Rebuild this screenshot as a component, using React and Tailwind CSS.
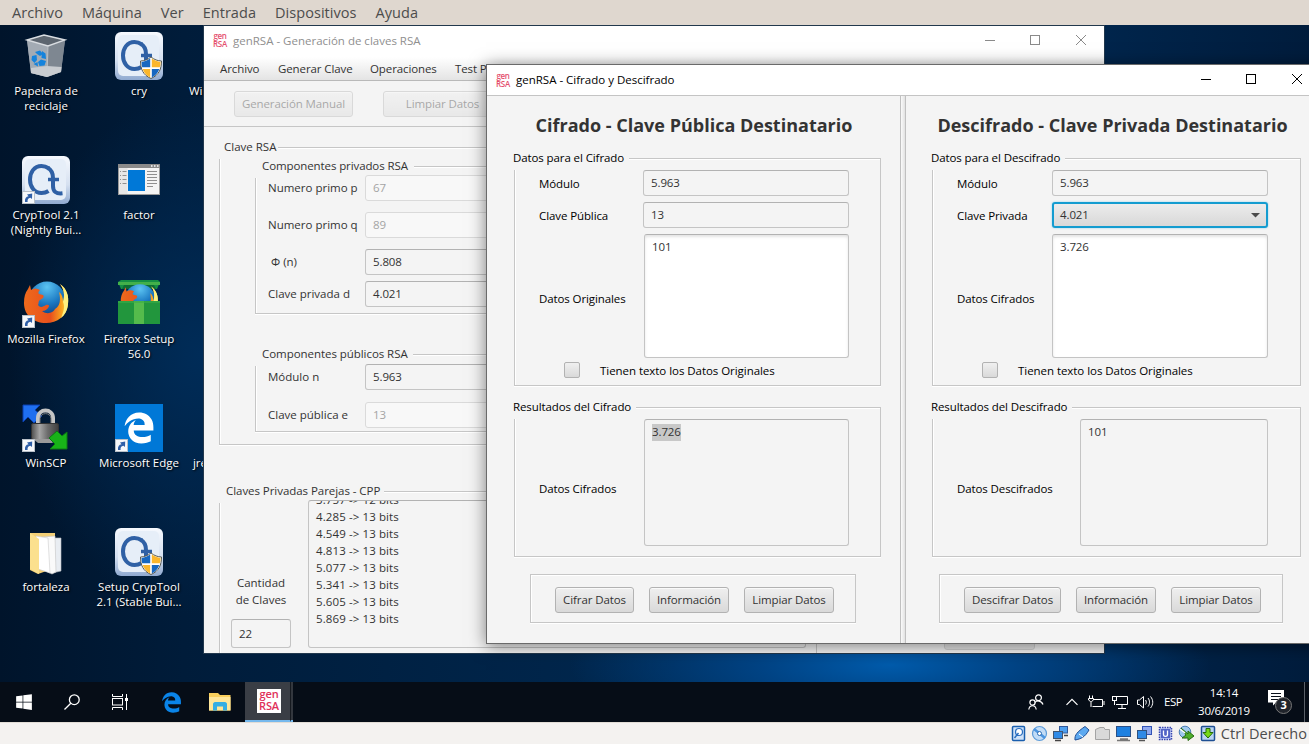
import React from "react";
import { FaEdgeLegacy, FaWindows } from "react-icons/fa6";

const LINE = "border-[#c6c6c6]";

/* ---------- icons ---------- */

function Shortcut() {
  return (
    <svg className="absolute bottom-0 left-0" width="13" height="13" viewBox="0 0 13 13">
      <rect x="0.5" y="0.5" width="12" height="12" fill="#f6f8fb" stroke="#b9c0c8" />
      <path d="M3 11C2.6 7.500 4 5.600 6.500 5.200L5 3.500L10.200 2.600L10 8L8.400 6.700C6.200 7 5.300 8.500 5.600 11Z" fill="#2f5fa8" />
    </svg>
  );
}

function CrypIcon({ shield, shortcut }) {
  return (
    <span className="relative block size-12">
      <svg width="48" height="48" viewBox="0 0 48 48">
        <defs>
          <linearGradient id="tile" x1="0" y1="0" x2="0" y2="1">
            <stop offset="0" stopColor="#f6f9fe" />
            <stop offset="0.6" stopColor="#d5e0f0" />
            <stop offset="1" stopColor="#8fa9d0" />
          </linearGradient>
        </defs>
        <rect x="0" y="0" width="48" height="48" rx="6" fill="url(#tile)" />
        <rect x="3" y="3" width="41" height="41" rx="5" fill="#e6eef8" />
        <path d="M27 12.500C24.500 10.800 22 10 19.500 10C12 10 8 16.500 8 23.500C8 31 12.500 37 19.500 37C22.500 37 24.500 36.300 26.500 35" fill="none" stroke="#2f60a5" strokeWidth="4" />
        <path d="M26 12C29.500 14 31 18 31 22V30C31 35.500 34 38 40.500 37.300" fill="none" stroke="#2f60a5" strokeWidth="4" />
        <path d="M26 23.500H37" stroke="#2f60a5" strokeWidth="3.500" />
        {shield && (
          <g>
            <path d="M36 25C33 27.500 29 29 25.500 29C25.500 37 28 43 36 46.500C44 43 46.500 37 46.500 29C43 29 39 27.500 36 25Z" fill="#fff" stroke="#5b5b50" />
            <path d="M35.200 26.600C32.500 28.700 29.500 29.700 26.500 29.900C26.500 32 26.700 33.800 27.200 35.300H35.200Z" fill="#1767c0" />
            <path d="M36.800 26.600C39.500 28.700 42.500 29.700 45.500 29.900C45.500 32 45.300 33.800 44.800 35.300H36.800Z" fill="#fbb62c" />
            <path d="M35.200 36.900H27.700C29 41 31.500 43.600 35.200 45.400Z" fill="#fbb62c" />
            <path d="M36.800 36.900H44.300C43 41 40.500 43.600 36.800 45.400Z" fill="#1767c0" />
          </g>
        )}
      </svg>
      {shortcut && <Shortcut />}
    </span>
  );
}

function BinIcon() {
  return (
    <svg width="48" height="48" viewBox="0 0 48 48">
      <path d="M5 8L22 3L43 8L39 40L25 45L9 41Z" fill="#8c959f" />
      <path d="M5 8L26 14L25 45L9 41Z" fill="#a3abb4" />
      <path d="M26 14L43 8L39 40L25 45Z" fill="#7e8791" />
      <path d="M9 36L25 34L39.500 35L39 40L25 45L9 41Z" fill="#c9ccd0" />
      <path d="M5 8L22 3L43 8L26 14Z" fill="#5d6670" stroke="#d9dde1" strokeWidth="1.400" />
      <path d="M26 14L25 45" stroke="#c5cbd1" strokeWidth="0.800" />
      <g fill="#1583dc">
        <path d="M13 20L18 18.500L21 22L18 24L15 22Z" />
        <path d="M20 19L23.500 21.500L24 27L19.500 26Z" />
        <path d="M10 24L14.500 23L15 28L12.500 31L9.500 28Z" />
        <path d="M16 30L19 27.500L24 29L22.500 33.500L17.500 34Z" />
        <path d="M11.500 32L15.500 30L16 34.500Z" />
      </g>
    </svg>
  );
}

function FactorIcon() {
  return (
    <svg width="48" height="48" viewBox="0 0 48 48">
      <rect x="3.500" y="8.500" width="41" height="30" fill="#f4f4f4" stroke="#9a9a9a" />
      <rect x="3" y="8" width="42" height="4" fill="#8a8a8a" />
      <path d="M36 10h1.500M39 10h1.500M42 10h1.500" stroke="#fff" strokeWidth="1.500" />
      <rect x="4" y="12" width="8.500" height="26" fill="#e6e6e6" />
      <rect x="13" y="14" width="17" height="21" fill="#0078d7" />
      <path d="M5 15.500h1M7.500 15.500h4M5 19.500h1M7.500 19.500h4M5 23.500h1M7.500 23.500h4M5 27.500h1M7.500 27.500h4" stroke="#8f8f8f" />
      <path d="M32 15.500h10M32 18.500h10M32 21.500h10M32 24.500h10M32 27.500h10M32 30.500h6" stroke="#8f8f8f" />
    </svg>
  );
}

function FoxArt() {
  return (
    <g>
      <defs>
        <radialGradient id="globe" cx="0.5" cy="0.15" r="0.9">
          <stop offset="0" stopColor="#5cc4f2" />
          <stop offset="0.5" stopColor="#1b78c2" />
          <stop offset="1" stopColor="#0d2f6e" />
        </radialGradient>
        <linearGradient id="fox" x1="0" y1="0" x2="1" y2="0">
          <stop offset="0" stopColor="#ee6a1c" />
          <stop offset="0.6" stopColor="#e9501d" />
          <stop offset="0.85" stopColor="#f9a31f" />
          <stop offset="1" stopColor="#fde24d" />
        </linearGradient>
      </defs>
      <circle cx="25" cy="20" r="18.500" fill="url(#globe)" />
      <path d="M38 4C45 9 47 16 46 24C45 36 35 43 24 43C11 43 2 35 2 23C2 17 3 13 6 9L8 5L9 10C12 8 15 8 18 10C16 12 16 13 17 14L21 15C23 17 20 19 18 20C16 21 17 24 16 25C18 28 21 27 24 25C27 24 28 26 26 28C24 31 20 31 20 31C25 35 31 33 33 29C38 26 39 20 37 12C40 14 41 18 41 22C43 15 42 9 38 4Z" fill="url(#fox)" />
      <path d="M38 4C45 9 47 16 46 24C45.500 30 43 35 39 38C42 31 43 26 41 22C43 15 42 9 38 4Z" fill="#fff17f" />
    </g>
  );
}

function FirefoxIcon() {
  return (
    <span className="relative block size-12">
      <svg width="48" height="48" viewBox="0 0 48 48"><FoxArt /></svg>
      <Shortcut />
    </span>
  );
}

function FirefoxSetupIcon() {
  return (
    <svg width="48" height="48" viewBox="0 0 48 48">
      <path d="M3 2L6 0H43L45 2L42 9H6Z" fill="#159044" />
      <path d="M3 2H45V5H3Z" fill="#43b04a" />
      <path d="M7 9L9 5H39L41 9Z" fill="#0d6c33" />
      <g transform="translate(4 3) scale(0.840)"><FoxArt /></g>
      <path d="M3 21H45V44H3Z" fill="#22963d" />
      <path d="M19 21H29V44H19Z" fill="#55bb4c" />
      <path d="M3 21H45V23H3Z" fill="#3cae48" opacity="0.6" />
    </svg>
  );
}

function WinScpIcon() {
  return (
    <span className="relative block size-12">
      <svg width="48" height="48" viewBox="0 0 48 48">
        <defs>
          <linearGradient id="lock" x1="0" y1="0" x2="1" y2="0">
            <stop offset="0" stopColor="#4e4e4e" />
            <stop offset="0.3" stopColor="#a5a5a5" />
            <stop offset="0.6" stopColor="#6c6c6c" />
            <stop offset="1" stopColor="#3e3e3e" />
          </linearGradient>
        </defs>
        <path d="M1 1L18 1L13 6L20 12L12 19L6 13L1 18Z" fill="#1f6ff0" stroke="#0b3fae" />
        <path d="M16 20V14C16 4 31 4 31 14V20" fill="none" stroke="#c4c4c4" strokeWidth="4" />
        <path d="M18 20V14.500C18 8 29 8 29 14.500V20" fill="none" stroke="#7c7c7c" strokeWidth="1" />
        <rect x="9.500" y="19.500" width="27" height="16" rx="1.500" fill="url(#lock)" stroke="#333" />
        <path d="M11 35L36 35L30 39H16Z" fill="#9a9a9a" />
        <path d="M45 28V45H28L33 40L27 34L35 27L40 32Z" fill="#18b318" stroke="#0c7a12" />
      </svg>
      <Shortcut />
    </span>
  );
}

function EdgeIcon() {
  return (
    <span className="relative flex size-12 items-center justify-center bg-[#0078d7] text-white">
      <FaEdgeLegacy size={32} />
      <Shortcut />
    </span>
  );
}

function FolderIcon() {
  return (
    <svg width="48" height="48" viewBox="0 0 48 48">
      <path d="M8 5H33V40L16 46L8 42Z" fill="#f4d077" />
      <path d="M26 10H39V43L30 45Z" fill="#e9edf2" stroke="#b5bac0" strokeWidth="0.600" />
      <path d="M20 9L33 8L34 44L30 46L19 41Z" fill="#fafafa" stroke="#c4c4c4" strokeWidth="0.600" />
      <path d="M14 8L26 10L28 45L16 41Z" fill="#fff" stroke="#ccc" strokeWidth="0.600" />
      <path d="M8 5L17 11V46L8 41Z" fill="#fbe08e" />
    </svg>
  );
}

function GenLogo({ small }) {
  return small ? (
    <span className="flex w-4 flex-col items-center font-['Open_Sans',sans-serif] text-[8px] leading-[8px] font-semibold tracking-[-0.3px] text-[#e5506e]">
      <span className="-mt-px">gen</span>
      <span>RSA</span>
    </span>
  ) : (
    <span className="ml-px flex size-6 flex-col items-center bg-white font-['Open_Sans',sans-serif] text-[11px] leading-[12px] font-semibold tracking-[-0.1px] text-[#e0305a]">
      <span className="-mt-px">gen</span>
      <span>RSA</span>
    </span>
  );
}

/* ---------- desktop ---------- */

const ICONS = [
  [<BinIcon />, "Papelera de", "reciclaje"],
  [<CrypIcon shield />, "cry"],
  [<CrypIcon shortcut />, "CrypTool 2.1", "(Nightly Bui..."],
  [<FactorIcon />, "factor"],
  [<FirefoxIcon />, "Mozilla Firefox"],
  [<FirefoxSetupIcon />, "Firefox Setup", "56.0"],
  [<WinScpIcon />, "WinSCP"],
  [<EdgeIcon />, "Microsoft Edge"],
  [<FolderIcon />, "fortaleza"],
  [<CrypIcon shield />, "Setup CrypTool", "2.1 (Stable Bui..."],
];

function Desktop() {
  return (
    <div className="flex h-full">
      <div className="grid w-[186px] shrink-0 auto-rows-[124px] grid-cols-[92px_94px] pt-[7px]">
        {ICONS.map(([icon, ...lines]) => (
          <div key={lines.join()} className="flex flex-col items-center">
            {icon}
            <div className="mt-[3px] flex flex-col items-center text-[11.500px] leading-[15px] tracking-[0px] whitespace-nowrap text-white [text-shadow:1px_1px_2px_#000]">
              {lines.map((l) => <span key={l}>{l}</span>)}
            </div>
          </div>
        ))}
      </div>
      <div className="w-[18px] overflow-hidden pt-[58px] pl-[3px] text-[11.500px] leading-[15px] text-white [text-shadow:1px_1px_2px_#000]">
        <div>Wi</div>
        <div className="mt-[357px] pl-[4px]">jre</div>
      </div>
    </div>
  );
}

/* ---------- controls ---------- */

function WindowButtons({ className, color }) {
  return (
    <svg className={className} width="102" height="12" viewBox="0 0 102 12" fill="none" stroke={color}>
      <path d="M0 6.500H10" />
      <rect x="45.500" y="1.500" width="9" height="9" />
      <path d="M91 1L101 11M101 1L91 11" />
    </svg>
  );
}

function Field({ className, children, disabled }) {
  return (
    <div className={`flex h-[26px] shrink-0 items-center rounded-[3px] border px-[7px] ${disabled ? "border-[#dadada] bg-[#f8f8f8] text-[#a4a4a4]" : "border-[#c4c4c4] border-t-[#b2b2b2] bg-[#f4f4f4] text-[#333]"} ${className}`}>
      {children}
    </div>
  );
}

function Area({ className, children }) {
  return (
    <div className={`shrink-0 rounded-[3px] border border-[#c4c4c4] border-t-[#b2b2b2] px-[7px] pt-[4px] leading-[16px] text-[#333] ${className}`}>
      {children}
    </div>
  );
}

function Button({ className, children }) {
  return (
    <div className={`flex h-[26px] shrink-0 items-center justify-center rounded-[3px] border border-[#b2b2b2] bg-linear-to-b from-[#efefef] to-[#d9d9d9] text-[#333] shadow-[inset_0_1px_0_#fafafa] ${className}`}>
      {children}
    </div>
  );
}

function Panel({ title, className, titleClass = "", children }) {
  return (
    <div className={`flex shrink-0 flex-col ${className}`}>
      <div className="flex h-6 shrink-0 items-center">
        <span className={`shrink-0 whitespace-nowrap ${titleClass}`}>{title}</span>
        <div className={`mt-3 h-3 flex-1 border-t border-r ${LINE} shadow-[inset_0_1px_0_#fff]`} />
      </div>
      <div className={`flex min-h-0 flex-1 flex-col border-x border-b ${LINE} shadow-[inset_1px_0_0_#fff,0_1px_0_#fff]`}>{children}</div>
    </div>
  );
}

/* ---------- main window ---------- */

function Row({ label, value, disabled, className = "" }) {
  return (
    <div className={`flex h-[26px] shrink-0 items-center pl-3 ${className}`}>
      <span className="w-[97px] shrink-0 whitespace-nowrap tracking-[0px]">{label}</span>
      <Field disabled={disabled} className="w-[300px]">{value}</Field>
    </div>
  );
}

const KEYS = ["3.757 -> 12 bits", "4.285 -> 13 bits", "4.549 -> 13 bits", "4.813 -> 13 bits", "5.077 -> 13 bits", "5.341 -> 13 bits", "5.605 -> 13 bits", "5.869 -> 13 bits"];

function MainWindow() {
  return (
    <div className="absolute top-0 left-[203px] flex h-[629px] w-[902px] flex-col overflow-hidden border border-[#22384d] bg-[#f4f4f4] text-[#333]">
      <div className="flex h-[31px] shrink-0 items-center bg-white pb-[2px] pl-2 text-[#8f8f8f]">
        <GenLogo small />
        <span className="ml-[5px] flex-1 tracking-[0px]">genRSA - Generación de claves RSA</span>
        <WindowButtons className="mr-[17px] -mt-px" color="#8a8a8a" />
      </div>
      <div className="flex h-6 shrink-0 items-center border-b border-[#b9b9b9] bg-linear-to-b from-white to-[#e4e4e4] pl-4 whitespace-nowrap">
        <span className="w-[58px]">Archivo</span>
        <span className="w-[92px]">Generar Clave</span>
        <span className="w-[85px]">Operaciones</span>
        <span>Test Primalidad</span>
      </div>
      <div className="flex h-[46px] shrink-0 items-center gap-[30px] border-b border-[#c6c6c6] pl-[30px]">
        <Button className="w-[119px] opacity-40">Generación Manual</Button>
        <Button className="w-[119px] opacity-40">Limpiar Datos</Button>
      </div>
      <Panel title="Clave RSA" titleClass="pl-[5px] pr-[2px] tracking-[0px]" className="mt-[8px] ml-[15px] h-[310px] w-[560px]">
        <Panel title="Componentes privados RSA" titleClass="pl-[7px] pr-[6px]" className="-mt-[5px] ml-[35px] h-[160px] w-[480px]">
          <Row label="Numero primo p" value="67" disabled className="-mt-[3px]" />
          <Row label="Numero primo q" value="89" disabled className="mt-[11px]" />
          <Row label={<span className="pl-[3px]">Φ (n)</span>} value="5.808" className="mt-[11px]" />
          <Row label="Clave privada d" value="4.021" className="mt-[6px]" />
        </Panel>
        <Panel title="Componentes públicos RSA" titleClass="pl-[7px] pr-[5px] tracking-[-0.05px]" className="mt-[28px] ml-[35px] h-[90px] w-[480px]">
          <Row label="Módulo n" value="5.963" className="-mt-[2px]" />
          <Row label="Clave pública e" value="13" disabled className="mt-[12px]" />
        </Panel>
      </Panel>
      <div className="mt-[34px] ml-[15px] flex h-[180px] shrink-0">
        <Panel title="Claves Privadas Parejas - CPP" titleClass="pl-[7px] pr-[4px] tracking-[-0.05px]" className="w-[598px]">
          <div className="-mt-[3px] flex">
            <div className="mt-[74px] ml-[11px] flex w-[60px] shrink-0 flex-col">
              <span className="text-center leading-[17px] tracking-[0px]">Cantidad<br />de Claves</span>
              <Field className="mt-[11px] h-[29px]">22</Field>
            </div>
            <div className="ml-[17px] flex h-[148px] w-[498px] flex-col overflow-hidden rounded-[3px] border border-[#c4c4c4] border-t-[#b2b2b2] pl-[7px] leading-[17px] tracking-[0.1px]">
              <div className="-mt-[10px]">{KEYS.map((k) => <div key={k}>{k}</div>)}</div>
            </div>
          </div>
        </Panel>
        <Button className="mt-[145px] ml-[127px] w-[91px] opacity-50" />
      </div>
    </div>
  );
}

/* ---------- dialog ---------- */

function CipherPane({ data }) {
  return (
    <div className="flex w-[413px] shrink-0 flex-col text-black">
      <h1 className={`mt-[17px] self-center text-[18px] leading-[24px] font-bold tracking-[0px] whitespace-nowrap text-[#333] ${data.headClass}`}>{data.heading}</h1>
      <Panel title={data.inputs} titleClass="pr-[5px] -ml-px" className={`mt-[9px] h-[240px] ${data.panel}`}>
        <div className="flex h-[26px] shrink-0 items-center">
          <span className={`${data.label} pt-[2px]`}>Módulo</span>
          <Field className={data.field}>5.963</Field>
        </div>
        <div className="mt-[6px] flex h-[26px] shrink-0 items-center">
          <span className={`${data.label} pt-[2px]`}>{data.keyLabel}</span>
          {data.select ? (
            <div className="flex h-[26px] w-[216px] items-center justify-between rounded-[3px] border-2 border-[#139cd0] bg-linear-to-b from-[#ececec] to-[#d8d8d8] pr-[6px] pl-[6px] text-[#333] shadow-[0_0_2px_#7fcbea]">
              4.021
              <svg width="9" height="5" viewBox="0 0 9 5"><path d="M0 0H9L4.500 4.500Z" fill="#4a4a4a" /></svg>
            </div>
          ) : (
            <Field className={data.field}>13</Field>
          )}
        </div>
        <div className="mt-[6px] flex h-[124px] shrink-0 items-center">
          <span className={`${data.label} mt-[5px]`}>{data.dataLabel}</span>
          <Area className={`h-[124px] bg-white shadow-[inset_0_2px_3px_#e4e4e4] ${data.area}`}>{data.input}</Area>
        </div>
        <div className="mt-[4px] ml-[49px] flex h-4 items-center">
          <span className="size-4 rounded-[2px] border border-[#b2b2b2] bg-linear-to-b from-[#f0f0f0] to-[#d9d9d9]" />
          <span className="ml-5 pt-[2px] tracking-[-0.05px]">Tienen texto los Datos Originales</span>
        </div>
      </Panel>
      <Panel title={data.results} titleClass="pr-[5px] -ml-px" className={`mt-[9px] h-[162px] ${data.panel}`}>
        <div className="flex h-[127px] shrink-0 items-center">
          <span className={`${data.outLabel} mt-[13px]`}>{data.outName}</span>
          <Area className={`h-[127px] ${data.outArea}`}>{data.output}</Area>
        </div>
      </Panel>
      <div className={`mt-[17px] flex h-[49px] shrink-0 items-center gap-[15px] border border-[#c6c6c6] pt-[2px] pl-6 shadow-[inset_1px_1px_0_#fff,0_1px_0_#fff] ${data.box}`}>
        <Button className={data.action}>{data.actionName}</Button>
        <Button className="w-[80px]">Información</Button>
        <Button className="w-[90px]">Limpiar Datos</Button>
      </div>
    </div>
  );
}

const ENC = {
  heading: "Cifrado - Clave Pública Destinatario",
  headClass: "ml-px",
  inputs: "Datos para el Cifrado",
  panel: "ml-[27px] w-[367px]",
  label: "w-[128px] pl-6 shrink-0 whitespace-nowrap",
  field: "w-[206px]",
  keyLabel: "Clave Pública",
  dataLabel: "Datos Originales",
  area: "ml-px w-[205px]",
  input: "101",
  results: "Resultados del Cifrado",
  outLabel: "w-[129px] pl-6 shrink-0 whitespace-nowrap",
  outName: "Datos Cifrados",
  outArea: "w-[205px]",
  output: <span className="inline-block h-[17px] bg-[#c8c8c8] leading-[16px]">3.726</span>,
  box: "ml-[43px] w-[326px]",
  action: "w-[79px]",
  actionName: "Cifrar Datos",
};

const DEC = {
  heading: "Descifrado - Clave Privada Destinatario",
  headClass: "",
  inputs: "Datos para el Descifrado",
  panel: "ml-[26px] w-[369px]",
  label: "w-[119px] pl-6 shrink-0 whitespace-nowrap",
  field: "w-[216px]",
  select: true,
  keyLabel: "Clave Privada",
  dataLabel: "Datos Cifrados",
  area: "w-[216px]",
  input: "3.726",
  results: "Resultados del Descifrado",
  outLabel: "w-[147px] pl-6 shrink-0 whitespace-nowrap",
  outName: "Datos Descifrados",
  outArea: "w-[188px]",
  output: "101",
  box: "ml-[33px] w-[344px]",
  action: "w-[97px]",
  actionName: "Descifrar Datos",
};

function CipherDialog() {
  return (
    <div className="absolute top-[39px] left-[486px] flex h-[580px] w-[840px] flex-col border border-[#6a6a6a] bg-[#f4f4f4] shadow-[0_2px_16px_rgba(0,0,0,0.5)]">
      <div className="flex h-[31px] shrink-0 items-center border-b border-[#c4c4c4] bg-white pl-2 text-black">
        <GenLogo small />
        <span className="ml-[5px] flex-1 tracking-[0px]">genRSA - Cifrado y Descifrado</span>
        <WindowButtons className="mr-[22px] -mt-[3px]" color="#000" />
      </div>
      <div className="flex min-h-0 flex-1">
        <CipherPane data={ENC} />
        <div className="w-[6px] shrink-0 border-x border-[#c0c0c0] bg-linear-to-r from-[#fafafa] to-[#e2e2e2]" />
        <CipherPane data={DEC} />
      </div>
    </div>
  );
}

/* ---------- bars ---------- */

function Taskbar() {
  return (
    <div className="flex h-10 shrink-0 items-center bg-[#060d17] text-white">
      <span className="flex w-12 justify-center"><FaWindows size={18} /></span>
      <svg className="mx-4" width="16" height="16" viewBox="0 0 16 16" fill="none" stroke="#fff" strokeWidth="1.300">
        <circle cx="10.300" cy="5.700" r="4.900" /><path d="M6.800 9.200L0.500 15.500" />
      </svg>
      <svg className="mx-4" width="16" height="16" viewBox="0 0 16 16" fill="none" stroke="#fff">
        <path d="M0.500 0V2.500H10.500V0M0.500 16V13.500H10.500V16M14.500 0V16" /><rect x="0.500" y="4.500" width="10" height="6.500" /><path d="M13 5.500H16" strokeWidth="3" />
      </svg>
      <span className="ml-[17px] text-[#0a84e8]"><FaEdgeLegacy size={21} /></span>
      <svg className="ml-[27px]" width="22" height="18" viewBox="0 0 22 18">
        <path d="M0 0H9L11 2H21.500V17.500H0Z" fill="#f9cf5c" /><path d="M0 4H21.500V17.500H0Z" fill="#ffe69a" />
        <path d="M4 17.500V11C4 10 5 9 6 9H16C17 9 18 10 18 11V17.500H14V13.500H8V17.500Z" fill="#35aee4" />
      </svg>
      <span className="ml-[14px] flex h-10 w-[45px] items-center justify-center border-b-2 border-[#76b9ed] bg-[#3a3e45] pl-[2px]"><GenLogo /></span>
      <span className="h-10 w-[3px] border-b-2 border-l border-[#76b9ed] border-l-[#15191f] bg-[#33373e]" />
      <span className="flex-1" />
      <svg width="16" height="16" viewBox="0 0 16 16" fill="none" stroke="#fff" strokeWidth="1.200">
        <circle cx="10.500" cy="3.800" r="2.900" /><path d="M6.800 8.500C8.500 6.500 13.500 6 15 10.500" /><circle cx="4.500" cy="8.500" r="2.600" /><path d="M0.800 15.500C1.500 10.500 7.500 10.500 8.200 15.500" />
      </svg>
      <svg className="ml-[22px]" width="12" height="8" viewBox="0 0 12 8" fill="none" stroke="#fff" strokeWidth="1.200"><path d="M0.500 6.800L6 1.300L11.500 6.800" /></svg>
      <svg className="ml-[10px]" width="17" height="14" viewBox="0 0 17 14" fill="none" stroke="#fff">
        <path d="M5.500 4.500H14.500V11.500H4.500M16 6V10" /><path d="M1.500 0.500V3M4.500 0.500V3M0.500 3.500H5.500V5L3.500 6.500H2.500L0.500 5ZM3 7V12" />
      </svg>
      <svg className="ml-[7px]" width="17" height="14" viewBox="0 0 17 14" fill="none" stroke="#fff">
        <path d="M5 1.500H15.500V9.500H4M10 10V13M6 13.500H14" /><rect x="0.500" y="1.500" width="4" height="4" /><path d="M2.500 6V10" />
      </svg>
      <svg className="ml-[8px]" width="17" height="14" viewBox="0 0 17 14" fill="none" stroke="#fff">
        <path d="M0.500 5V9.500H2.500L6.500 13V1.500L2.500 5Z" /><path d="M8.500 5C9.500 6 9.500 8.500 8.500 9.500M11 3C13 5.500 13 9 11 11.500M13.500 1.500C16.500 5 16.500 9.500 13.500 13" />
      </svg>
      <span className="ml-[10px] w-[20px] text-[11.500px] tracking-[-0.5px]">ESP</span>
      <span className="ml-[13px] flex w-[54px] flex-col items-center text-[11.500px] leading-[18px] whitespace-nowrap"><span className="tracking-[-0.2px]">14:14</span><span className="tracking-[-0.3px]">30/6/2019</span></span>
      <span className="relative ml-[17px] block h-6 w-[25px]">
        <svg width="17" height="16" viewBox="0 0 17 16"><path d="M0 0H16V12.500H8L5 15.500V12.500H0Z" fill="#fff" /><path d="M3 3.500H13M3 6.500H13M3 9.500H10" stroke="#0a111b" /></svg>
        <span className="absolute top-[7px] left-[7px] flex size-[17px] items-center justify-center rounded-full border border-[#777] bg-[#20242b] text-[11px] font-bold">3</span>
      </span>
      <span className="ml-[11px] h-10 w-[5px] border-l border-[#5a6068]" />
    </div>
  );
}

function StatusBar() {
  return (
    <div className="flex h-[22px] shrink-0 items-center justify-end border-t border-[#e2ddd6] bg-[#f4f2f0] pr-[2px] text-[14.500px] tracking-[0.1px] text-[#4c4c4c]">
      <svg className="mr-[4px]" width="206" height="17" viewBox="0 0 206 17" fill="none">
        <rect x="1.500" y="1.500" width="12" height="14" rx="1" fill="#cfe2f8" stroke="#1a5fae" strokeWidth="1.500" />
        <circle cx="8" cy="7" r="3.500" fill="#fff" stroke="#2b6fc0" strokeWidth="1.200" /><path d="M3.500 13L7.500 8" stroke="#2b6fc0" strokeWidth="1.500" />
        <circle cx="28.500" cy="8.500" r="7" fill="#c2dcf6" stroke="#5d9bd8" strokeWidth="1.200" /><path d="M23 4L28 8L34 13" stroke="#4b95e0" strokeWidth="2.500" /><circle cx="28.500" cy="8.500" r="2" fill="#fff" stroke="#2c6db5" />
        <rect x="48.500" y="1.500" width="8" height="6.500" fill="#4fa0ee" stroke="#31589a" /><rect x="42.500" y="6.500" width="9" height="7" fill="#2f8ae6" stroke="#41556f" /><path d="M44 15.500H50M53 10.500H57" stroke="#444" strokeWidth="1.500" />
        <path d="M64 15C63.500 10 66 7 74 1.500L78 5C74 12 70 14 64 15Z" fill="#5da9f0" stroke="#1d4c94" /><path d="M68 9L72 12" stroke="#fff" />
        <path d="M84.500 14.500V4.500L89 2.500H93L94 4.500H98.500V14.500Z" fill="#d9d9d9" stroke="#a4a4a4" />
        <rect x="105.500" y="1.500" width="14" height="10" fill="#1e80e0" stroke="#2a4f86" /><path d="M109 14H117M106 15.500H119" stroke="#777" strokeWidth="1.500" />
        <rect x="131.500" y="1.500" width="9" height="8" fill="#8fa8ee" stroke="#3353b5" /><rect x="126.500" y="5.500" width="9" height="8" fill="#2f8ae6" stroke="#30517d" /><path d="M128 15.500H134" stroke="#555" strokeWidth="1.500" />
        <rect x="148.500" y="2.500" width="12" height="12" fill="#b9c4f3" stroke="#3848b0" strokeWidth="1.500" strokeDasharray="1.500 1" /><rect x="150" y="4" width="9" height="9" fill="#5163c6" /><path d="M152.500 5.500V9.500C152.500 12 156.500 12 156.500 9.500V5.500" stroke="#fff" strokeWidth="1.300" />
        <circle cx="174" cy="7" r="5.800" fill="#9fc8ee" stroke="#4a7eb5" />
        <path d="M170 3L177 9V6L183 11L177 15.500V13H171L175 10Z" fill="#4fae2c" stroke="#276c14" /><path d="M169 4L174 8" stroke="#fff" strokeWidth="1.500" />
        <rect x="190.500" y="1.500" width="13" height="14" rx="1" fill="#b9d3f2" stroke="#1e4f93" strokeWidth="1.500" /><path d="M195 3.500H199V7.500H202L197 13L192 7.500H195Z" fill="#78d818" stroke="#246b0a" />
      </svg>
      <span>Ctrl Derecho</span>
    </div>
  );
}

export default function App() {
  return (
    <div className="flex h-[744px] w-[1309px] flex-col overflow-hidden font-['Open_Sans',sans-serif] text-[11.500px] tracking-[-0.1px]">
      <div className="flex h-[25px] shrink-0 items-center gap-[19px] bg-[#dfd7cf] pl-3 text-[14.500px] tracking-[0.05px] text-[#4c4c4c]">
        <span>Archivo</span><span>Máquina</span><span>Ver</span><span>Entrada</span><span>Dispositivos</span><span>Ayuda</span>
      </div>
      <div className="relative h-[657px] shrink-0 overflow-hidden bg-[#001a38] bg-[radial-gradient(ellipse_320px_80px_at_890px_640px,#005bab_0%,#004384_40%,transparent_100%),radial-gradient(ellipse_190px_260px_at_200px_330px,#002c58_0%,transparent_100%),linear-gradient(90deg,#00142b_0%,#001c3a_14%,#00264c_45%,#002a55_75%,#001c3c_100%)]">
        <Desktop />
        <MainWindow />
        <CipherDialog />
      </div>
      <Taskbar />
      <StatusBar />
    </div>
  );
}
